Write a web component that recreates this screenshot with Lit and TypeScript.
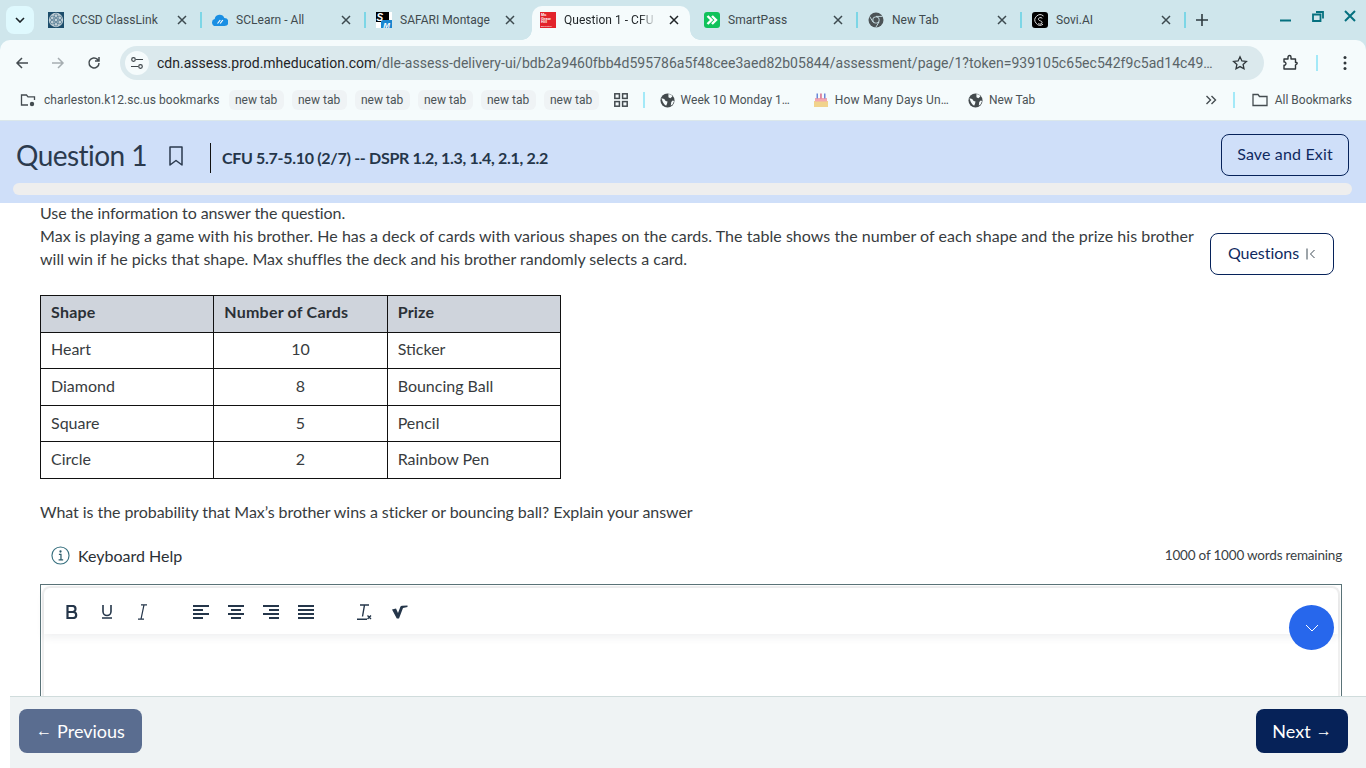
import { LitElement, html, css } from "lit";
import { customElement } from "lit/decorators.js";

const closeX = html`<svg class="x" width="10" height="10" viewBox="0 0 10 10"><path d="M1 1l8 8M9 1l-8 8" stroke="currentColor" stroke-width="1.500" fill="none"/></svg>`;
const globe = html`<svg width="15" height="15" viewBox="0 0 16 16"><circle cx="8" cy="8" r="7.500" fill="#434a4d"/><path d="M1.500 5.500l3 1 1.500 2 2 .5-.5 2.500-1 2-2-1.500-1.500-2.500zM9 1l3 .8 1.200 2L11 5.500l-2-1zM13.500 8l1.500.5-1.500 3.500-2 1.500.5-4z" fill="#f5fbfc"/></svg>`;
const chromeIco = html`<svg width="16" height="16" viewBox="0 0 16 16"><circle cx="8" cy="8" r="7.500" fill="#4c5356"/><circle cx="8" cy="8" r="3.600" fill="#cfe6ec"/><circle cx="8" cy="8" r="2.700" fill="#4c5356"/><path d="M8 4.400h6.500M5 10l-3.300-5.500M11 10l-3.300 5.500" stroke="#cfe6ec" stroke-width=".9"/></svg>`;

const favicons = {
  ccsd: html`<svg width="16" height="16" viewBox="0 0 16 16"><rect width="16" height="16" fill="#1d4d6b"/><circle cx="8" cy="8" r="7.200" fill="#c3d0d6"/><g fill="none" stroke="#3d6a85" stroke-width=".7"><circle cx="8" cy="8" r="1.800"/><circle cx="8" cy="3.700" r="1.800"/><circle cx="8" cy="12.300" r="1.800"/><circle cx="4.200" cy="5.900" r="1.800"/><circle cx="11.800" cy="5.900" r="1.800"/><circle cx="4.200" cy="10.100" r="1.800"/><circle cx="11.800" cy="10.100" r="1.800"/></g></svg>`,
  sc: html`<svg width="16" height="16" viewBox="0 0 16 16"><path d="M3.500 14a3.500 3.500 0 0 1-.8-6.900A5 5 0 0 1 12.300 6a4 4 0 0 1 .2 8z" fill="#1a8fe3"/><path d="M5.500 11.500l2.800-3.500M8.200 11.500l2.600-3.500" stroke="#fff" stroke-width="1.200" fill="none"/></svg>`,
  sm: html`<svg width="16" height="16" viewBox="0 0 16 16"><rect width="16" height="16" fill="#fff"/><rect width="13" height="10" fill="#000"/><rect x="5" y="8" width="11" height="8" fill="#1b86d0"/><text x=".5" y="9" font-family="Liberation Sans" font-weight="700" font-style="italic" font-size="10" fill="#fff">S</text><text x="7.300" y="15.500" font-family="Liberation Sans" font-weight="700" font-style="italic" font-size="8" fill="#fff">M</text></svg>`,
  mh: html`<svg width="16" height="16" viewBox="0 0 16 16"><rect width="16" height="16" fill="#e2232b"/><g fill="#fff" font-family="Liberation Sans" font-weight="700" font-size="3.800"><text x="1" y="4">Mc</text><text x="1" y="7.500">Graw</text><text x="1" y="11">Hill</text><text x="1" y="14.500" font-size="2.400" font-weight="400">Education</text></g></svg>`,
  sp: html`<svg width="16" height="16" viewBox="0 0 16 16"><rect width="16" height="16" rx="3" fill="#10c25b"/><path d="M3.500 4L7.500 8 3.500 12M8 4L12 8 8 12" stroke="#fff" stroke-width="2.400" fill="none"/></svg>`,
  chrome: chromeIco,
  sovi: html`<svg width="16" height="16" viewBox="0 0 16 16"><rect width="16" height="16" rx="3" fill="#000"/><path d="M11.500 4A5.200 5.200 0 1 0 11 12.300M10.300 6.300C8.800 4.800 6 5.800 6.500 7.500s3.300 1 3.600 2.700-2.200 2.600-3.800 1.300" stroke="#dcdcdc" stroke-width="1" fill="none"/></svg>`,
};

const tabs = [
  { ico: favicons.ccsd, t: "CCSD ClassLink" },
  { ico: favicons.sc, t: "SCLearn - All" },
  { ico: favicons.sm, t: "SAFARI Montage" },
  { ico: favicons.mh, t: "Question 1 - CFU", active: true },
  { ico: favicons.sp, t: "SmartPass" },
  { ico: favicons.chrome, t: "New Tab" },
  { ico: favicons.sovi, t: "Sovi.AI" },
];

@customElement("app-root")
export class AppRoot extends LitElement {
  static styles = css`
    :host { display: block; width: 1366px; height: 768px; overflow: hidden; position: relative; background: #cfe6ec; font-family: Lato, sans-serif; color: #2d3338; }
    * { box-sizing: border-box; }
    svg { display: block; flex: none; }

    .strip { height: 40px; background: #cfe6ec; display: flex; align-items: flex-start; position: relative; padding-left: 6px; }
    .drop { width: 28px; height: 28px; margin-top: 6px; margin-right: 2px; border-radius: 8px; background: #dff9fe; display: flex; align-items: center; justify-content: center; }
    .tab { width: 164px; height: 34px; margin-top: 6px; padding: 0 10px 6px 12px; display: flex; align-items: center; position: relative; font: 12px Roboto, sans-serif; color: #3f4a4e; letter-spacing: .03px; }
    .tab .label { margin-left: 8px; width: 102px; white-space: nowrap; }
    .tab .x { margin-left: 3px; color: #3d4a4f; }
    .tab .sep { position: absolute; right: -1.500px; top: 6px; width: 2px; height: 16px; background: #7dd6e6; }
    .tab.active { width: 158px; margin-left: 4px; margin-right: 2px; padding-left: 8px; background: #f5fbfc; border-radius: 10px 10px 0 0; color: #1f2427; }
    .tab.active .label { width: 90px; -webkit-mask-image: linear-gradient(90deg, #000 84%, rgba(0,0,0,.15)); mask-image: linear-gradient(90deg, #000 84%, rgba(0,0,0,.15)); }
    .tab.active .x { margin-left: 15px; color: #1f2427; }
    .tab.active::before, .tab.active::after { content: ""; position: absolute; bottom: 0; width: 10px; height: 10px; background: radial-gradient(circle at 0 0, transparent 9.500px, #f5fbfc 10px); }
    .tab.active::before { left: -10px; }
    .tab.active::after { right: -10px; background: radial-gradient(circle at 100% 0, transparent 9.500px, #f5fbfc 10px); }
    .plus { margin: 14px 0 0 12px; color: #2f3b40; }
    .win { position: absolute; right: 8px; top: 10px; display: flex; gap: 16px; color: #05707f; }

    .toolbar { height: 46px; background: #f5fbfc; border-radius: 10px 10px 0 0; display: flex; align-items: center; padding: 0 14px; position: relative; color: #444c50; }
    .nav { display: flex; align-items: center; gap: 20px; width: 106px; }
    .omni { width: 1144px; height: 34px; border-radius: 17px; background: #dbe9ed; display: flex; align-items: center; padding: 0 16px 0 5px; font: 14px Roboto, sans-serif; color: #5a6468; }
    .omni .tune { width: 24px; height: 24px; border-radius: 50%; background: #f5fbfc; display: flex; align-items: center; justify-content: center; margin-right: 8px; flex: none; }
    .omni .host { color: #1f2427; letter-spacing: 0; }
    .omni .url { flex: 1; white-space: nowrap; overflow: hidden; letter-spacing: .04px; }
    .tools { display: flex; align-items: center; margin-left: 18px; }
    .vsep { width: 2px; height: 16px; background: #a3e9f8; flex: none; }

    .bookmarks { height: 34px; background: #f5fbfc; display: flex; align-items: center; padding: 0 14px 6px 20px; font: 12px Roboto, sans-serif; color: #4a5256; white-space: nowrap; position: relative; }
    .bm { display: flex; align-items: center; gap: 6px; }
    .wide1 { letter-spacing: .07px; margin-left: 2px; }
    .wide2 { letter-spacing: .16px; }
    .chip { width: 55px; height: 20px; line-height: 20px; text-align: center; background: #eff3f5; border-radius: 6px; margin-right: 8px; flex: none; }

    .head { height: 83px; background: #cfdff9; padding: 13px 14px 0 16px; border-top: 1px solid #dbe7ea; position: relative; }
    .headrow { display: flex; align-items: center; height: 44px; }
    h1 { margin: 0 0 2px; font: 400 28px Lato, sans-serif; letter-spacing: -.55px; color: #2b3a4e; }
    .mark { margin: 0 26px 0 21px; color: #2b3a4e; }
    .sub { border-left: 1px solid #111; height: 30px; line-height: 30px; margin-top: 4px; padding-left: 11px; font-weight: 700; font-size: 16px; letter-spacing: -.3px; color: #25364a; }
    .save { margin-left: auto; margin-right: 3px; align-self: flex-start; width: 128px; height: 42px; border: 1px solid #06225a; border-radius: 8px; padding-bottom: 3px; display: flex; align-items: center; justify-content: center; font-size: 16px; letter-spacing: .15px; color: #0f2a5f; }
    .progress { height: 12px; margin: 5px 0 0 -3px; width: 1339px; background: #eeeeee; border-radius: 6px; }

    .main { position: relative; height: 565px; background: #fff; overflow: hidden; padding: 0 24px 0 40px; font-size: 16px; line-height: 23px; color: #383c40; }
    .intro { display: flex; align-items: flex-start; }
    .intro p { margin: -2px 0 0; width: 1170px; }
    .intro .first { letter-spacing: -.08px; }
    .intro .second { letter-spacing: .04px; }
    .intro .third { letter-spacing: -.015px; }
    .qbtn { margin: 30px 0 0 0; width: 124px; height: 42px; border: 1px solid #06225a; border-radius: 8px; padding-bottom: 3px; display: flex; align-items: center; justify-content: center; gap: 7px; color: #0f2a5f; flex: none; letter-spacing: -.05px; }
    .qbtn svg { margin-top: 3px; }
    table { border-collapse: collapse; margin-top: 20px; width: 521px; table-layout: fixed; color: #383c40; }
    td, th { border: 1px solid #111; height: 36.600px; padding: 0 10px 3px; text-align: left; font-weight: 400; }
    th { background: #cfd4dc; font-weight: 700; color: #2b3036; letter-spacing: .22px; padding-bottom: 4px; }
    .c { text-align: center; }
    .ask { margin: 21px 0 0; letter-spacing: -.06px; }
    .kb { display: flex; align-items: center; margin-top: 21px; height: 24px; padding-left: 11px; color: #2b3036; }
    .kb .lab { margin-left: 8px; }
    .kb .count { margin-left: auto; font-size: 13.500px; letter-spacing: -.19px; color: #3a3f44; }
    .editor { margin-top: 16px; height: 130px; border: 1px solid #5a7378; border-bottom: 0; padding: 1px 1px 0; }
    .inner { border: 2px solid #f0f0f0; border-bottom: 0; border-radius: 8px 8px 0 0; height: 100%; }
    .etb { height: 46px; border-radius: 8px 8px 0 0; display: flex; align-items: center; padding: 2px 0 0 21px; box-shadow: 0 3px 8px rgba(40,50,60,.08); color: #25364a; }
    .etb .i { width: 35px; flex: none; display: flex; }
    .etb .gap { width: 23px; flex: none; }
    .fab { position: absolute; left: 1289px; top: 402px; width: 45px; height: 45px; border-radius: 50%; background: #2767ec; display: flex; align-items: center; justify-content: center; color: #fff; }

    .foot { position: absolute; left: 10px; right: 0; bottom: 0; height: 72px; background: #eff3f4; border-top: 1px solid #d0dcdc; display: flex; align-items: flex-start; justify-content: space-between; padding: 12px 18px 0 9px; font-size: 18px; color: #fff; }
    .btn { height: 44px; border-radius: 8px; display: flex; align-items: center; justify-content: center; gap: 5px; }
    .arrow { font: 16px "Liberation Sans", sans-serif; }
    .prev { width: 123px; background: #5a6d90; }
    .next { width: 92px; background: #062258; }
  `;

  render() {
    return html`
      <div class="strip">
        <div class="drop"><svg width="10" height="6" viewBox="0 0 10 6"><path d="M1 1l4 4 4-4" stroke="#1c2428" stroke-width="1.600" fill="none"/></svg></div>
        ${tabs.map((t, i) => html`<div class="tab ${t.active ? "active" : ""}">
          ${t.ico}<span class="label">${t.t}</span>${closeX}
          ${!t.active && i !== 2 ? html`<span class="sep"></span>` : ""}
        </div>`)}
        <svg class="plus" width="12" height="12" viewBox="0 0 12 12"><path d="M6 0v12M0 6h12" stroke="currentColor" stroke-width="1.600"/></svg>
        <div class="win">
          <svg width="16" height="16" viewBox="0 0 16 16"><path d="M2 10.500h11" stroke="currentColor" stroke-width="2"/></svg>
          <svg width="16" height="16" viewBox="0 0 16 16"><path d="M6 2h7v6.500M3 4.500h7.500V11H3z" stroke="currentColor" stroke-width="1.800" fill="none"/></svg>
          <svg width="16" height="16" viewBox="0 0 16 16"><path d="M3 1l10 10M13 1L3 11" stroke="currentColor" stroke-width="2" fill="none"/></svg>
        </div>
      </div>
      <div class="toolbar">
        <div class="nav">
          <svg width="16" height="16" viewBox="0 0 16 16"><path d="M14 8H3M8 3L3 8l5 5" stroke="#444c50" stroke-width="1.500" fill="none"/></svg>
          <svg width="16" height="16" viewBox="0 0 16 16"><path d="M2 8h11M8 3l5 5-5 5" stroke="#a6aeb1" stroke-width="1.500" fill="none"/></svg>
          <svg width="16" height="16" viewBox="0 0 16 16"><path d="M13 8a5 5 0 1 1-1.500-3.600L13 6M13 2v4H9" stroke="#444c50" stroke-width="1.500" fill="none"/></svg>
        </div>
        <div class="omni">
          <span class="tune"><svg width="14" height="14" viewBox="0 0 14 14"><g stroke="#3f474b" stroke-width="1.200" fill="none"><circle cx="3.500" cy="3.500" r="1.800"/><path d="M6 3.500h7M1 10.500h7"/><circle cx="10.500" cy="10.500" r="1.800"/></g></svg></span>
          <span class="url"><span class="host">cdn.assess.prod.mheducation.com</span>/dle-assess-delivery-ui/bdb2a9460fbb4d595786a5f48cee3aed82b05844/assessment/page/1?token=939105c65ec542f9c5ad14c49…</span>
          <svg width="16" height="16" viewBox="0 0 16 16"><path d="M8 1.800l1.900 4.100 4.500.5-3.300 3 .9 4.400L8 11.600l-4 2.200.9-4.400-3.300-3 4.500-.5z" stroke="#2f363a" stroke-width="1.300" fill="none"/></svg>
        </div>
        <div class="tools">
          <svg width="18" height="18" viewBox="0 0 18 18"><path d="M2 5h4V3a1.500 1.500 0 0 1 3 0v2h4.500v3.500h1.300a1 1 0 0 1 0 1.500l-1.300 1V15H2v-3.800h1a1.800 1.800 0 0 0 0-3.200H2z" stroke="#2f363a" stroke-width="1.400" fill="none" stroke-linejoin="round"/></svg>
          <span class="vsep" style="margin-left:16px"></span>
          <svg style="margin-left:25px" width="4" height="16" viewBox="0 0 4 16"><circle cx="2" cy="2.500" r="1.500" fill="#2f363a"/><circle cx="2" cy="8" r="1.500" fill="#2f363a"/><circle cx="2" cy="13.500" r="1.500" fill="#2f363a"/></svg>
        </div>
      </div>
      <div class="bookmarks">
        <div class="bm" style="margin-right:9px">
          <svg width="16" height="16" viewBox="0 0 16 16"><path d="M8 13H1.500V3h5l1.500 1.800h6.500V8" stroke="#444c50" stroke-width="1.300" fill="none"/><circle cx="12" cy="12" r="2.200" fill="#444c50"/></svg>
          <span class="wide1">charleston.k12.sc.us bookmarks</span>
        </div>
        ${[0, 1, 2, 3, 4, 5].map(() => html`<span class="chip">new tab</span>`)}
        <svg style="margin-left:7px" width="14" height="14" viewBox="0 0 14 14"><g fill="none" stroke="#444c50" stroke-width="1.500"><rect x=".8" y=".8" width="4.600" height="4.600"/><rect x="8.600" y=".8" width="4.600" height="4.600"/><rect x=".8" y="8.600" width="4.600" height="4.600"/><rect x="8.600" y="8.600" width="4.600" height="4.600"/></g></svg>
        <span class="vsep" style="margin:0 15px 0 15px"></span>
        <div class="bm" style="margin-right:23px">${globe}<span>Week 10 Monday 1…</span></div>
        <div class="bm" style="margin-right:19px">
          <svg width="16" height="16" viewBox="0 0 16 16"><rect x="1" y="9" width="14" height="6" fill="#f1d38c"/><rect x="2" y="6" width="12" height="3.500" fill="#f4a6b0"/><rect x="3.500" y="1.500" width="1.500" height="5" fill="#6a86d8"/><rect x="7.200" y="1.500" width="1.500" height="5" fill="#d86a8a"/><rect x="11" y="1.500" width="1.500" height="5" fill="#6a86d8"/></svg>
          <span class="wide2">How Many Days Un…</span>
        </div>
        <div class="bm">${globe}<span>New Tab</span></div>
        <svg style="margin-left:auto" width="12" height="10" viewBox="0 0 12 10"><path d="M1.500 1l4 4-4 4M6.500 1l4 4-4 4" stroke="#444c50" stroke-width="1.400" fill="none"/></svg>
        <span class="vsep" style="margin:0 17px 0 16px"></span>
        <div class="bm" style="gap:7px"><svg width="16" height="14" viewBox="0 0 16 14"><path d="M1 12.500V1.500h5l1.500 2h7.500v9z" stroke="#444c50" stroke-width="1.300" fill="none"/></svg><span>All Bookmarks</span></div>
      </div>

      <div class="head">
        <div class="headrow">
          <h1>Question 1</h1>
          <svg class="mark" width="16" height="20" viewBox="0 0 16 20"><path d="M2 1h12v18l-6-4.500L2 19z" stroke="currentColor" stroke-width="1.500" fill="none" stroke-linejoin="round"/></svg>
          <div class="sub">CFU 5.7-5.10 (2/7) -- DSPR 1.2, 1.3, 1.4, 2.1, 2.2</div>
          <div class="save">Save and Exit</div>
        </div>
        <div class="progress"></div>
      </div>

      <div class="main">
        <div class="intro">
          <p><span class="first">Use the information to answer the question.</span><br><span class="second">Max is playing a game with his brother. He has a deck of cards with various shapes on the cards. The table shows the number of each shape and the prize his brother</span> <span class="third">will win if he picks that shape. Max shuffles the deck and his brother randomly selects a card.</span></p>
          <div class="qbtn">Questions <svg width="10" height="12" viewBox="0 0 10 12"><path d="M1 .5v11M8.500 2l-4 4 4 4" stroke="#3d4a55" fill="none"/></svg></div>
        </div>
        <table>
          <tr><th>Shape</th><th>Number of Cards</th><th>Prize</th></tr>
          <tr><td>Heart</td><td class="c">10</td><td>Sticker</td></tr>
          <tr><td>Diamond</td><td class="c">8</td><td>Bouncing Ball</td></tr>
          <tr><td>Square</td><td class="c">5</td><td>Pencil</td></tr>
          <tr><td>Circle</td><td class="c">2</td><td>Rainbow Pen</td></tr>
        </table>
        <p class="ask">What is the probability that Max’s brother wins a sticker or bouncing ball? Explain your answer</p>
        <div class="kb">
          <svg width="19" height="19" viewBox="0 0 20 20"><circle cx="10" cy="10" r="9" stroke="#37707f" stroke-width="1.200" fill="none"/><path d="M8.300 8.700H10.500V14.500M8 14.500h4.800" stroke="#2b5c6a" stroke-width="1.300" fill="none"/><circle cx="10" cy="5.800" r="1.200" fill="#2b5c6a"/></svg>
          <span class="lab">Keyboard Help</span>
          <span class="count">1000 of 1000 words remaining</span>
        </div>
        <div class="editor"><div class="inner"><div class="etb">
          <span class="i"><svg width="14" height="14" viewBox="0 0 14 14"><path d="M2.500 1h5a3 3 0 0 1 0 6H2.500zM2.500 7h5.700a3 3 0 0 1 0 6H2.500z" stroke="currentColor" stroke-width="2.200" fill="none"/></svg></span>
          <span class="i"><svg width="14" height="14" viewBox="0 0 14 14"><path d="M3 0v6.500a4 4 0 0 0 8 0V0M2 13h10" stroke="currentColor" stroke-width="1.600" fill="none"/></svg></span>
          <span class="i"><svg width="14" height="16" viewBox="0 0 14 16"><path d="M6 .8h6M3 15.200h6M9 .8L6 15.200" stroke="currentColor" stroke-width="1.200" fill="none"/></svg></span>
          <span class="gap"></span>
          ${[
            "M0 2h16M0 6h10M0 10h16M0 14h10",
            "M0 2h16M3 6h10M0 10h16M3 14h10",
            "M0 2h16M6 6h10M0 10h16M6 14h10",
            "M0 2h16M0 6h16M0 10h16M0 14h16",
          ].map((d) => html`<span class="i"><svg width="16" height="16" viewBox="0 0 16 16"><path d=${d} stroke="currentColor" stroke-width="1.800"/></svg></span>`)}
          <span class="gap"></span>
          <span class="i"><svg width="16" height="16" viewBox="0 0 16 16"><path d="M4 1h9M8.500 1L6.500 12.500M1 15.200h10M11.500 11.500l3.500 3.500M15 11.500L11.500 15" stroke="currentColor" stroke-width="1.400" fill="none"/></svg></span>
          <span class="i" style="margin-left:1px"><svg width="16" height="14" viewBox="0 0 16 14"><path d="M0 4.500L4 3.500L6 8L8.500 1.500Q9 .8 10 .8L15.500 .5V2L11 3L7 13.500H4.800z" fill="currentColor"/></svg></span>
        </div></div></div>
        <div class="fab"><svg width="14" height="8" viewBox="0 0 14 8"><path d="M1 1l6 6 6-6" stroke="#fff" stroke-width="1" fill="none"/></svg></div>
      </div>

      <div class="foot">
        <div class="btn prev"><span class="arrow">←</span>Previous</div>
        <div class="btn next">Next<span class="arrow">→</span></div>
      </div>
    `;
  }
}
